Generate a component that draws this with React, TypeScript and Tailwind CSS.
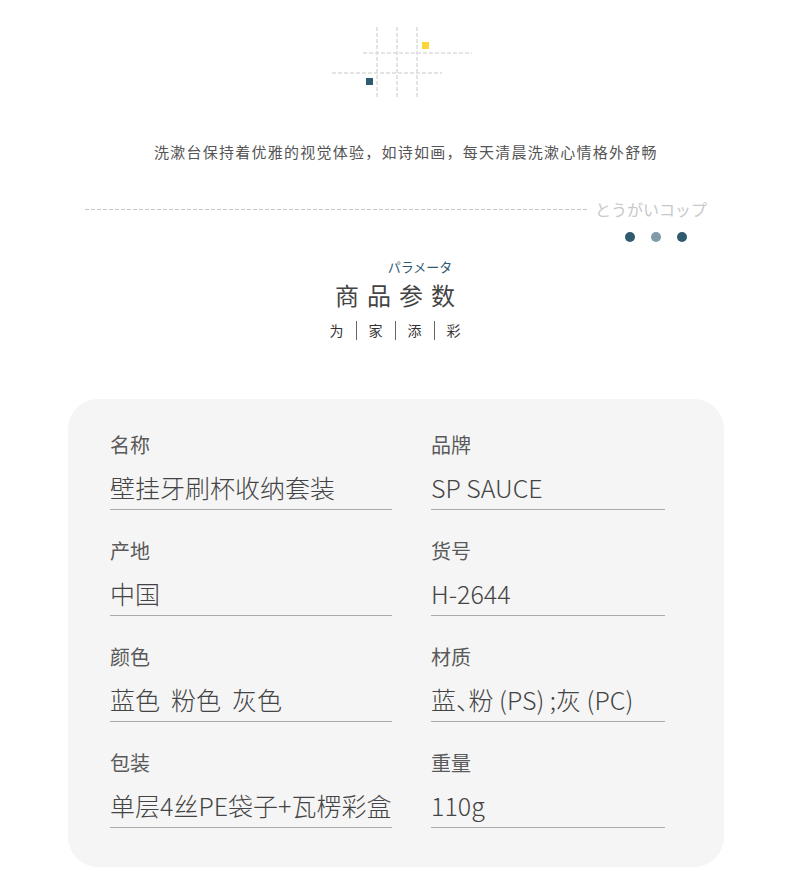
import React from 'react';

const font = { fontFamily: '"Noto Sans CJK SC", "Noto Sans", sans-serif' };

const params: [string, string][] = [
  ['名称', '壁挂牙刷杯收纳套装'],
  ['品牌', 'SP SAUCE'],
  ['产地', '中国'],
  ['货号', 'H-2644'],
  ['颜色', '蓝色  粉色  灰色'],
  ['材质', '蓝、粉 (PS) ;灰 (PC)'],
  ['包装', '单层4丝PE袋子+瓦楞彩盒'],
  ['重量', '110g'],
];

const GridMark: React.FC = () => (
  <svg width="160" height="80" viewBox="0 0 160 80" className="block">
    <g stroke="#dcdcdc" strokeWidth="1.5" strokeDasharray="4 2" fill="none">
      <line x1="62" y1="7" x2="62" y2="77" />
      <line x1="82" y1="7" x2="82" y2="77" />
      <line x1="102" y1="7" x2="102" y2="77" />
      <line x1="48" y1="33" x2="157" y2="33" />
      <line x1="17" y1="53" x2="127" y2="53" />
    </g>
    <rect x="107" y="22" width="7" height="7" fill="#fcd53a" />
    <rect x="51" y="58" width="7" height="7" fill="#2f5a70" />
  </svg>
);

const App: React.FC = () => {
  return (
    <div className="w-[790px] h-[895px] bg-white overflow-hidden" style={font}>
      <div className="flex justify-center pt-[20px]">
        <GridMark />
      </div>

      <p className="mt-[41px] pl-[22px] text-center text-[15px] leading-[22px] tracking-[1.25px] text-[#555]">
        洗漱台保持着优雅的视觉体验，如诗如画，每天清晨洗漱心情格外舒畅
      </p>

      {/* divider with caption */}
      <div className="mt-[35px] flex items-center pl-[85px] pr-[83px] gap-[7px]">
        <div className="flex-1 h-px bg-[repeating-linear-gradient(to_right,#c8c8c8_0_4px,transparent_4px_6px)]" />
        <span className="text-[16px] leading-[22px] text-[#c8c8c8]">とうがいコップ</span>
      </div>

      <div className="mt-[12px] flex justify-end gap-[16px] pr-[103px]">
        <span className="w-[10px] h-[10px] rounded-full bg-[#2f5a70]" />
        <span className="w-[10px] h-[10px] rounded-full bg-[#7f9aa8]" />
        <span className="w-[10px] h-[10px] rounded-full bg-[#2f5a70]" />
      </div>

      <div className="mt-[16px] flex flex-col items-center">
        <span className="ml-[50px] text-[13px] leading-[18px] text-[#2f5a70]">パラメータ</span>
        <span className="mt-[4px] text-[24px] leading-[30px] tracking-[8px] pl-[8px] text-[#444]">商品参数</span>
        <div className="mt-[10px] flex items-center gap-[12px] text-[14px] leading-[20px] text-[#333]">
          <span>为</span>
          <span className="w-px h-[19px] bg-[#666]" />
          <span>家</span>
          <span className="w-px h-[19px] bg-[#666]" />
          <span>添</span>
          <span className="w-px h-[19px] bg-[#666]" />
          <span>彩</span>
        </div>
      </div>

      <div className="mt-[59px] mx-[68px] w-[656px] rounded-[30px] bg-[#f5f5f5] pl-[42px] pt-[32px] pb-[39px]">
        <div className="grid grid-cols-[282px_234px] gap-x-[39px] gap-y-[27px]">
          {params.map(([label, value]) => (
            <div key={label} className="flex flex-col">
              <span className="text-[20px] leading-[28px] text-[#5a5a5a]">{label}</span>
              <span className="mt-[11px] pb-[5px] border-b border-[#aaa] text-[25px] leading-[34px] font-light text-[#444] whitespace-pre [font-feature-settings:'halt']">
                {value}
              </span>
            </div>
          ))}
        </div>
      </div>
    </div>
  );
};

export default App;
